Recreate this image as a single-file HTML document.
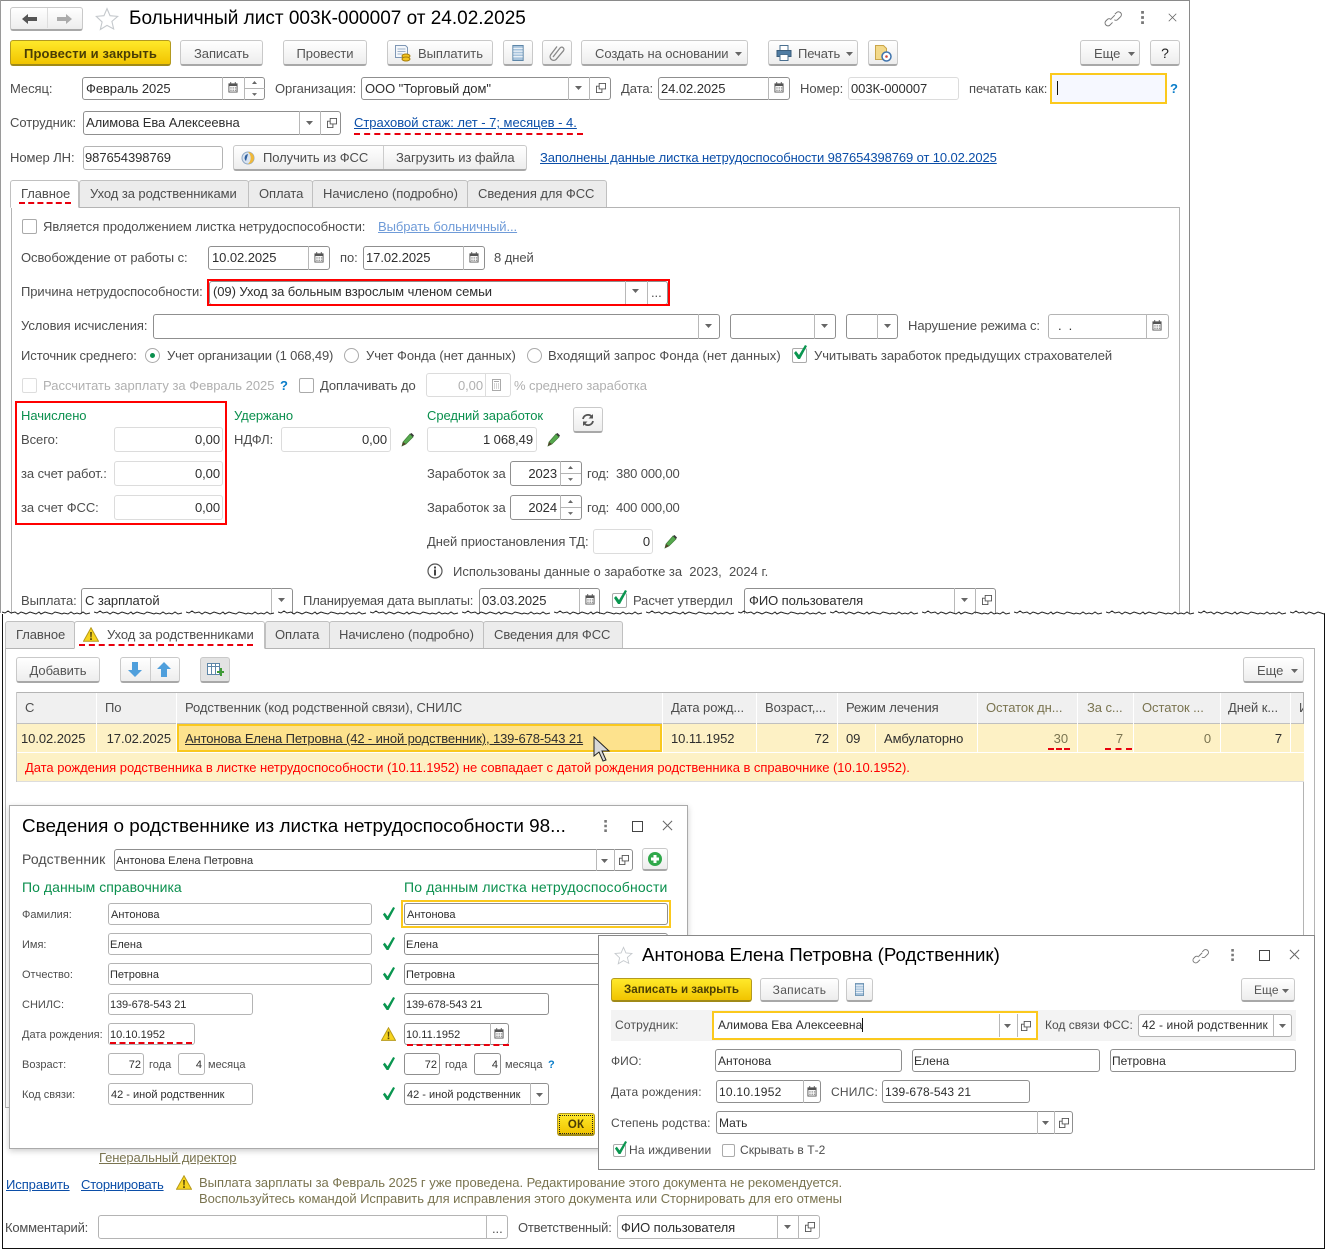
<!DOCTYPE html>
<html lang="ru"><head><meta charset="utf-8"><title>Больничный лист</title>
<style>
html,body{margin:0;padding:0;background:#fff}
#p{position:relative;width:1327px;height:1253px;overflow:hidden;background:#fff;font-family:"Liberation Sans",Arial,sans-serif;font-size:13px;letter-spacing:-.07px;color:#4d4d4d}
.t{position:absolute;white-space:nowrap;line-height:18px;height:16px}
.d{color:#2e2e2e}
.r{text-align:right}
.g{color:#0a8f4d}
.o{color:#7a7450}
.m{color:#b0b0b0}
.l{color:#0b4ea8;text-decoration:underline}
.f,.b,.y,.x{position:absolute;box-sizing:border-box}
.f{border:1px solid #b4b4b4;border-radius:3px;background:#fff}
.n{border-color:#dcdcdc}
.k{border-color:#8f8f8f}
.b{border:1px solid #c9c9c9;border-bottom:2px solid #a8a8a8;border-radius:3px;background:linear-gradient(#fff,#ededed);text-align:center;color:#555;line-height:22px}
.y{border:1px solid #b39a20;border-bottom:2px solid #a08a18;border-radius:3px;background:linear-gradient(#ffe92a,#f1c400);text-align:center;font-weight:bold;color:#4a3d05;line-height:22px;letter-spacing:.15px}
.v{position:absolute;width:1px;background:#b8b8b8}
.h{position:absolute;height:1px;background:#b4b4b4}
.x{background:#ececec;border:1px solid #c0c0c0;border-bottom:none;border-radius:3px 3px 0 0}
.w{background:#fff;border-bottom:1px solid #fff}
.q{position:absolute}
.rd{position:absolute;height:0;border-top:2px dashed #e8000d}
.rb{position:absolute;box-sizing:border-box;border:2px solid #f00}
.s{font-size:11px;letter-spacing:0;line-height:16px;height:14px;margin-top:1px}
.z{font-size:12px;letter-spacing:.05px;line-height:16px}
.c{position:absolute;box-sizing:border-box;width:15px;height:15px;border:1px solid #aaa;border-radius:2px;background:#fff}
.ra{position:absolute;box-sizing:border-box;width:15px;height:15px;border:1px solid #aaa;border-radius:50%;background:#fff}
.u{color:#0a7dc9;font-weight:bold}
</style></head><body><div id="p">
<svg width="0" height="0" style="position:absolute"><defs>
<symbol id="a" viewBox="0 0 7 4"><path d="M0 0h7L3.5 4z" fill="#666"/></symbol>
<symbol id="cal" viewBox="0 0 11 12"><path d="M1 2h9v9H1z" fill="#fff" stroke="#555"/><path d="M1 2h9v2.4H1z" fill="#555"/><path d="M3 0v2.500M8 0v2.500" stroke="#555"/><path d="M2.500 6h1.500v1H2.500zM5 6h1.500v1H5zM7.500 6H9v1H7.500zM2.500 8.500h1.500v1H2.500zM5 8.500h1.500v1H5zM7.500 8.500H9v1H7.500z" fill="#555"/></symbol>
<symbol id="cp" viewBox="0 0 11 11"><path d="M3.500 6.500V.5h7v6z M3.500 3.500H.5v7h6v-4" fill="none" stroke="#555"/></symbol>
<symbol id="ok" viewBox="0 0 14 15"><path d="M1 8l2-2 3 4L12 0l2 1-7 13H5z" fill="#0a9650"/></symbol>
<symbol id="wr" viewBox="0 0 16 15"><path d="M8 .8L15.500 14.300H.5z" fill="#f6d41f" stroke="#b79a18"/><path d="M7.100 5h1.800l-.3 5.500H7.400zM7.100 11.300h1.800v1.700H7.100z" fill="#5a4a0a"/></symbol>
<symbol id="pn" viewBox="0 0 14 14"><path d="M1 13l1-4 7-8 3 3-7 7z" fill="#56a94e" stroke="#3d7d36" stroke-width=".7"/><path d="M1 13l1-4 3 2z" fill="#54402a"/><path d="M9 1l3 3 1-1.500L10.500 0z" fill="#3a3a3a"/></symbol>
<symbol id="ch" viewBox="0 0 22 22"><path d="M13 9l-4 4M13 8l2-2a3.200 3.200 0 014.500 4.500l-3 3a3 3 0 01-4 .5M9 14a3 3 0 00-4-.5l-2 2a3.200 3.200 0 004.500 4.500l3-3" fill="none" stroke="#777" stroke-width="1.100"/></symbol>
<symbol id="dt" viewBox="0 0 4 14"><path d="M0 0h3v3H0zM0 5.500h3v3H0zM0 11h3v3H0z" fill="#777"/></symbol>
<symbol id="cl" viewBox="0 0 12 12"><path d="M1 1l10 10M11 1L1 11" stroke="#666" stroke-width="1.100" fill="none"/></symbol>
<symbol id="st" viewBox="0 0 22 22"><path d="M11 1.500l2.800 6.500 7 .6-5.300 4.600 1.600 6.900L11 16.900l-6.100 3.700 1.600-6.900L1.200 8.600l7-.6z" fill="#fff" stroke="#c4c8cc"/></symbol>
<symbol id="dc" viewBox="0 0 12 17"><path d="M.5.500h11v16H.5z" fill="#a7c3dc" stroke="#5d86a8"/><path d="M1 3.500h10M1 6.500h10M1 9.500h10M1 12.500h10" stroke="#fff"/></symbol>
<symbol id="wv" viewBox="0 0 92 5"><path d="M0 2l3 1 3-2 3 2 4-1 3 2 3-2 3 1 2 1 4-2 3 1 3 1 3-2 2 2 4-2 3 1 4 1 3-2 4 1 3 1 2-1 4 1 3-2 3 2 3-1 3 1 3-2 3 2 4-1" fill="none" stroke="#222" stroke-width="1"/></symbol>
</defs></svg>

<!-- top window -->
<div class="q" style="left:0;top:0;width:1190px;height:1px;background:#8a8a8a"></div>
<div class="q" style="left:0;top:0;width:1px;height:613px;background:#9a9a9a"></div>
<div class="q" style="left:1189px;top:0;width:1px;height:613px;background:#8a8a8a"></div>

<div class="b" style="left:10px;top:7px;width:73px;height:24px"></div><div class="v" style="left:47px;top:8px;height:20px;background:#ddd"></div>
<svg class="q" style="left:22px;top:13px" width="16" height="12"><path d="M0 6l6-5v3h9v4H6v3z" fill="#555"/></svg>
<svg class="q" style="left:57px;top:13px" width="16" height="12"><path d="M15 6L9 1v3H0v4h9v3z" fill="#aaa"/></svg>
<svg class="q" style="left:95px;top:7px" width="24" height="24"><use href="#st"/></svg>
<div class="t" style="left:129px;top:8px;height:22px;line-height:22px;font-size:19px;letter-spacing:0;color:#000">Больничный лист 003К-000007 от 24.02.2025</div>
<svg class="q" style="left:1103px;top:7px" width="20" height="20"><use href="#ch"/></svg>
<svg class="q" style="left:1141px;top:11px" width="4" height="13"><use href="#dt"/></svg>
<svg class="q" style="left:1168px;top:13px" width="9" height="9"><use href="#cl"/></svg>

<div class="y" style="left:10px;top:40px;width:161px;height:26px;line-height:26px">Провести и закрыть</div>
<div class="b" style="left:180px;top:40px;width:83px;height:26px;line-height:26px">Записать</div>
<div class="b" style="left:283px;top:40px;width:84px;height:26px;line-height:26px">Провести</div>
<div class="b" style="left:387px;top:40px;width:106px;height:26px;line-height:26px;text-align:left;padding-left:30px">Выплатить</div>
<svg class="q" style="left:395px;top:45px" width="16" height="17"><path d="M.5.500h10l2 2v10H.5z" fill="#f4f7fb" stroke="#7e96b4"/><path d="M2.500 4h8M2.500 6.500h8M2.500 9h5" stroke="#9db0c8"/><ellipse cx="11" cy="11" rx="4" ry="2" fill="#f3c421" stroke="#a67d0a"/><ellipse cx="11" cy="14" rx="4" ry="2" fill="#f3c421" stroke="#a67d0a"/></svg>
<div class="b" style="left:503px;top:40px;width:30px;height:26px"></div>
<svg class="q" style="left:512px;top:45px" width="12" height="16"><use href="#dc"/></svg>
<div class="b" style="left:542px;top:40px;width:30px;height:26px"></div>
<svg class="q" style="left:549px;top:44px" width="17" height="17"><path d="M4 13L11 4a2.200 2.200 0 013.400 2.800L7 15.500a3.600 3.600 0 01-5.400-4.600L8 2.500" fill="none" stroke="#888" stroke-width="1.300"/></svg>
<div class="b" style="left:581px;top:40px;width:167px;height:26px;line-height:26px;text-align:left;padding-left:13px">Создать на основании</div>
<svg class="q" style="left:735px;top:52px" width="7" height="4"><use href="#a"/></svg>
<div class="b" style="left:768px;top:40px;width:90px;height:26px;line-height:26px;text-align:left;padding-left:29px">Печать</div>
<svg class="q" style="left:776px;top:45px" width="16" height="16"><path d="M4 .5h8v5H4z" fill="#fff" stroke="#4a6f8f"/><path d="M1 5.500h14v6H1z" fill="#4f7ca3" stroke="#3a5c7a"/><path d="M4 9.500h8v6H4z" fill="#fff" stroke="#4a6f8f"/></svg>
<svg class="q" style="left:846px;top:52px" width="7" height="4"><use href="#a"/></svg>
<div class="b" style="left:868px;top:40px;width:30px;height:26px"></div>
<svg class="q" style="left:875px;top:45px" width="17" height="17"><path d="M.5.500h8l3 3v11H.5z" fill="#f3d98a" stroke="#c9a54a"/><circle cx="11.500" cy="11.500" r="4.500" fill="#fff" stroke="#3f74ad" stroke-width="1.500"/><circle cx="11.500" cy="11.500" r="1.300" fill="#d04a3a"/></svg>
<div class="b" style="left:1080px;top:40px;width:60px;height:26px;line-height:26px;text-align:left;padding-left:13px">Еще</div>
<svg class="q" style="left:1128px;top:52px" width="7" height="4"><use href="#a"/></svg>
<div class="b" style="left:1150px;top:40px;width:30px;height:26px;line-height:25px;color:#222;font-size:14px">?</div>

<!-- row 1 -->
<div class="t" style="left:10px;top:80px">Месяц:</div>
<div class="f k" style="left:82px;top:77px;width:183px;height:23px"></div><div class="v" style="left:222px;top:77px;height:23px"></div><div class="v" style="left:244px;top:77px;height:23px"></div><div class="h" style="left:244px;top:88px;width:21px"></div>
<div class="t d" style="left:86px;top:80px">Февраль 2025</div>
<svg class="q" style="left:228px;top:82px" width="10" height="11"><use href="#cal"/></svg>
<svg class="q" style="left:252px;top:81px" width="5" height="3"><path d="M0 3L2.500 0 5 3z" fill="#666"/></svg><svg class="q" style="left:252px;top:93px" width="5" height="3"><use href="#a"/></svg>
<div class="t" style="left:275px;top:80px">Организация:</div>
<div class="f k" style="left:361px;top:77px;width:250px;height:23px"></div><div class="v" style="left:568px;top:77px;height:23px"></div><div class="v" style="left:589px;top:77px;height:23px"></div>
<div class="t d" style="left:365px;top:80px">ООО "Торговый дом"</div>
<svg class="q" style="left:575px;top:86px" width="7" height="4"><use href="#a"/></svg><svg class="q" style="left:596px;top:83px" width="10" height="10"><use href="#cp"/></svg>
<div class="t" style="left:621px;top:80px">Дата:</div>
<div class="f k" style="left:658px;top:77px;width:132px;height:23px"></div><div class="v" style="left:768px;top:77px;height:23px"></div>
<div class="t d" style="left:661px;top:80px">24.02.2025</div>
<svg class="q" style="left:774px;top:82px" width="10" height="11"><use href="#cal"/></svg>
<div class="t" style="left:800px;top:80px">Номер:</div>
<div class="f n" style="left:848px;top:77px;width:111px;height:23px"></div>
<div class="t d" style="left:851px;top:80px">003К-000007</div>
<div class="t" style="left:969px;top:80px">печатать как:</div>
<div class="q" style="left:1050px;top:73px;width:117px;height:31px;box-sizing:border-box;border:2px solid #fbc91d;background:#f6f8ff"></div>
<div class="q" style="left:1057px;top:81px;width:1px;height:14px;background:#111"></div>
<div class="t u" style="left:1170px;top:80px">?</div>

<!-- row 2 -->
<div class="t" style="left:10px;top:114px">Сотрудник:</div>
<div class="f k" style="left:83px;top:111px;width:258px;height:24px"></div><div class="v" style="left:299px;top:111px;height:24px"></div><div class="v" style="left:320px;top:111px;height:24px"></div>
<div class="t d" style="left:86px;top:114px">Алимова Ева Алексеевна</div>
<svg class="q" style="left:306px;top:121px" width="7" height="4"><use href="#a"/></svg><svg class="q" style="left:327px;top:118px" width="10" height="10"><use href="#cp"/></svg>
<div class="t l" style="left:354px;top:114px;letter-spacing:-.02px">Страховой стаж: лет - 7; месяцев - 4.</div>
<div class="rd" style="left:354px;top:133px;width:229px"></div>

<!-- row 3 -->
<div class="t" style="left:10px;top:149px">Номер ЛН:</div>
<div class="f" style="left:83px;top:146px;width:140px;height:24px"></div>
<div class="t d" style="left:85px;top:149px">987654398769</div>
<div class="b" style="left:233px;top:145px;width:294px;height:26px"></div><div class="v" style="left:383px;top:146px;height:23px;background:#ccc"></div>
<svg class="q" style="left:241px;top:151px" width="14" height="14"><circle cx="7" cy="7" r="6" fill="#d8e3f0" stroke="#8fa7c4"/><path d="M7 1a6 6 0 010 12 8 8 0 000-12z" fill="#f0b93a"/><path d="M7 3a4 4 0 00-2 7z" fill="#2e5f9e"/></svg>
<div class="t" style="left:263px;top:149px">Получить из ФСС</div>
<div class="t" style="left:396px;top:149px">Загрузить из файла</div>
<div class="t l" style="left:540px;top:149px;letter-spacing:-.11px">Заполнены данные листка нетрудоспособности 987654398769 от 10.02.2025</div>

<!-- tabs -->
<div class="q" style="left:11px;top:207px;width:1169px;height:420px;box-sizing:border-box;border:1px solid #b4b4b4"></div>
<div class="x w" style="left:10px;top:180px;width:69px;height:28px"></div>
<div class="x" style="left:79px;top:180px;width:170px;height:27px"></div>
<div class="x" style="left:248px;top:180px;width:65px;height:27px"></div>
<div class="x" style="left:312px;top:180px;width:156px;height:27px"></div>
<div class="x" style="left:467px;top:180px;width:140px;height:27px"></div>
<div class="t" style="left:21px;top:185px">Главное</div>
<div class="t" style="left:90px;top:185px">Уход за родственниками</div>
<div class="t" style="left:259px;top:185px">Оплата</div>
<div class="t" style="left:323px;top:185px">Начислено (подробно)</div>
<div class="t" style="left:478px;top:185px">Сведения для ФСС</div>
<div class="rd" style="left:19px;top:202px;width:52px"></div>

<!-- main panel -->
<div class="c" style="left:22px;top:219px"></div>
<div class="t" style="left:43px;top:218px">Является продолжением листка нетрудоспособности:</div>
<div class="t" style="left:378px;top:218px;color:#6f9bd8;text-decoration:underline">Выбрать больничный...</div>

<div class="t" style="left:21px;top:249px">Освобождение от работы с:</div>
<div class="f k" style="left:208px;top:246px;width:122px;height:24px"></div><div class="v" style="left:308px;top:246px;height:24px"></div>
<div class="t d" style="left:212px;top:249px">10.02.2025</div>
<svg class="q" style="left:314px;top:252px" width="10" height="11"><use href="#cal"/></svg>
<div class="t" style="left:340px;top:249px">по:</div>
<div class="f k" style="left:363px;top:246px;width:122px;height:24px"></div><div class="v" style="left:463px;top:246px;height:24px"></div>
<div class="t d" style="left:366px;top:249px">17.02.2025</div>
<svg class="q" style="left:469px;top:252px" width="10" height="11"><use href="#cal"/></svg>
<div class="t" style="left:494px;top:249px">8 дней</div>

<div class="t" style="left:21px;top:283px">Причина нетрудоспособности:</div>
<div class="f k" style="left:209px;top:281px;width:459px;height:24px"></div><div class="v" style="left:625px;top:281px;height:24px"></div><div class="v" style="left:647px;top:281px;height:24px"></div>
<div class="rb" style="left:207px;top:279px;width:463px;height:27px"></div>
<div class="t d" style="left:213px;top:283px">(09) Уход за больным взрослым членом семьи</div>
<svg class="q" style="left:632px;top:289px" width="7" height="4"><use href="#a"/></svg>
<div class="t" style="left:651px;top:284px">...</div>

<div class="t" style="left:21px;top:317px">Условия исчисления:</div>
<div class="f k" style="left:153px;top:314px;width:567px;height:25px"></div><div class="v" style="left:698px;top:314px;height:25px"></div>
<svg class="q" style="left:705px;top:324px" width="7" height="4"><use href="#a"/></svg>
<div class="f k" style="left:730px;top:314px;width:106px;height:25px"></div><div class="v" style="left:814px;top:314px;height:25px"></div>
<svg class="q" style="left:821px;top:324px" width="7" height="4"><use href="#a"/></svg>
<div class="f k" style="left:846px;top:314px;width:52px;height:25px"></div><div class="v" style="left:877px;top:314px;height:25px"></div>
<svg class="q" style="left:884px;top:324px" width="7" height="4"><use href="#a"/></svg>
<div class="t" style="left:908px;top:317px">Нарушение режима с:</div>
<div class="f" style="left:1048px;top:314px;width:121px;height:25px"></div><div class="v" style="left:1146px;top:314px;height:25px"></div>
<div class="t d" style="left:1058px;top:317px">.&nbsp; .</div>
<svg class="q" style="left:1152px;top:320px" width="10" height="11"><use href="#cal"/></svg>

<div class="t" style="left:21px;top:347px">Источник среднего:</div>
<div class="ra" style="left:145px;top:348px"></div><div class="q" style="left:150px;top:353px;width:5px;height:5px;border-radius:50%;background:#0a8f4d"></div>
<div class="t" style="left:167px;top:347px;letter-spacing:-.14px">Учет организации (1 068,49)</div>
<div class="ra" style="left:344px;top:348px"></div>
<div class="t" style="left:366px;top:347px">Учет Фонда (нет данных)</div>
<div class="ra" style="left:527px;top:348px"></div>
<div class="t" style="left:548px;top:347px;letter-spacing:.08px">Входящий запрос Фонда (нет данных)</div>
<div class="c" style="left:792px;top:348px"></div>
<svg class="q" style="left:793px;top:345px" width="14" height="15"><use href="#ok"/></svg>
<div class="t" style="left:814px;top:347px">Учитывать заработок предыдущих страхователей</div>

<div class="c" style="left:22px;top:378px;border-color:#ddd"></div>
<div class="t m" style="left:43px;top:377px;letter-spacing:-.01px">Рассчитать зарплату за Февраль 2025</div>
<div class="t u" style="left:280px;top:377px">?</div>
<div class="c" style="left:299px;top:378px"></div>
<div class="t" style="left:320px;top:377px">Доплачивать до</div>
<div class="f n" style="left:426px;top:373px;width:85px;height:24px;background:#fff"></div><div class="v" style="left:485px;top:373px;height:24px;background:#ddd"></div>
<div class="t m r" style="left:430px;top:377px;width:53px">0,00</div>
<svg class="q" style="left:492px;top:379px" width="10" height="12"><path d="M.5.500h8v11h-8z" fill="none" stroke="#aaa"/><path d="M2 2.500h5M2 5h1M4 5h1M6 5h1M2 7h1M4 7h1M6 7h1M2 9h1M4 9h1M6 9h1" stroke="#aaa"/></svg>
<div class="t m" style="left:514px;top:377px">% среднего заработка</div>

<div class="rb" style="left:15px;top:401px;width:212px;height:124px"></div>
<div class="t g" style="left:21px;top:407px">Начислено</div>
<div class="t g" style="left:234px;top:407px">Удержано</div>
<div class="t g" style="left:427px;top:407px">Средний заработок</div>
<div class="t" style="left:21px;top:431px">Всего:</div>
<div class="f n" style="left:114px;top:427px;width:109px;height:25px"></div><div class="t d r" style="left:120px;top:431px;width:100px">0,00</div>
<div class="t" style="left:21px;top:465px">за счет работ.:</div>
<div class="f n" style="left:114px;top:461px;width:109px;height:25px"></div><div class="t d r" style="left:120px;top:465px;width:100px">0,00</div>
<div class="t" style="left:21px;top:499px">за счет ФСС:</div>
<div class="f n" style="left:114px;top:495px;width:109px;height:25px"></div><div class="t d r" style="left:120px;top:499px;width:100px">0,00</div>
<div class="t" style="left:234px;top:431px">НДФЛ:</div>
<div class="f n" style="left:281px;top:427px;width:110px;height:25px"></div><div class="t d r" style="left:287px;top:431px;width:100px">0,00</div>
<svg class="q" style="left:401px;top:433px" width="14" height="14"><use href="#pn"/></svg>
<div class="f n" style="left:427px;top:427px;width:110px;height:25px"></div><div class="t d r" style="left:433px;top:431px;width:100px">1 068,49</div>
<svg class="q" style="left:547px;top:433px" width="14" height="14"><use href="#pn"/></svg>
<div class="b" style="left:573px;top:407px;width:30px;height:26px"></div>
<svg class="q" style="left:582px;top:414px" width="12" height="12"><path d="M1 5a5 5 0 019-2M11 7a5 5 0 01-9 2" fill="none" stroke="#555" stroke-width="1.800"/><path d="M11 0v4.500H6.500zM1 12V7.500h4.500z" fill="#555"/></svg>

<div class="t" style="left:427px;top:465px">Заработок за</div>
<div class="f k" style="left:510px;top:461px;width:72px;height:25px"></div><div class="v" style="left:560px;top:461px;height:25px"></div><div class="h" style="left:560px;top:473px;width:21px"></div>
<div class="t d r" style="left:520px;top:465px;width:37px">2023</div>
<svg class="q" style="left:568px;top:466px" width="5" height="3"><path d="M0 3L2.500 0 5 3z" fill="#666"/></svg><svg class="q" style="left:568px;top:478px" width="5" height="3"><use href="#a"/></svg>
<div class="t" style="left:587px;top:465px;letter-spacing:-.14px">год:&nbsp; 380 000,00</div>
<div class="t" style="left:427px;top:499px">Заработок за</div>
<div class="f k" style="left:510px;top:495px;width:72px;height:25px"></div><div class="v" style="left:560px;top:495px;height:25px"></div><div class="h" style="left:560px;top:507px;width:21px"></div>
<div class="t d r" style="left:520px;top:499px;width:37px">2024</div>
<svg class="q" style="left:568px;top:500px" width="5" height="3"><path d="M0 3L2.500 0 5 3z" fill="#666"/></svg><svg class="q" style="left:568px;top:512px" width="5" height="3"><use href="#a"/></svg>
<div class="t" style="left:587px;top:499px;letter-spacing:-.14px">год:&nbsp; 400 000,00</div>
<div class="t" style="left:427px;top:533px">Дней приостановления ТД:</div>
<div class="f n" style="left:593px;top:529px;width:60px;height:25px"></div><div class="t d r" style="left:600px;top:533px;width:50px">0</div>
<svg class="q" style="left:664px;top:535px" width="14" height="14"><use href="#pn"/></svg>
<svg class="q" style="left:427px;top:563px" width="16" height="16"><circle cx="8" cy="8" r="7" fill="#fff" stroke="#555" stroke-width="1.200"/><path d="M7 3.500h2v2H7zM7 6.500h2v6H7z" fill="#444"/></svg>
<div class="t" style="left:453px;top:563px;letter-spacing:-.01px">Использованы данные о заработке за&nbsp; 2023,&nbsp; 2024 г.</div>

<div class="t" style="left:21px;top:592px">Выплата:</div>
<div class="f k" style="left:81px;top:588px;width:212px;height:30px"></div><div class="v" style="left:271px;top:588px;height:30px"></div>
<div class="t d" style="left:85px;top:592px">С зарплатой</div>
<svg class="q" style="left:278px;top:598px" width="7" height="4"><use href="#a"/></svg>
<div class="t" style="left:303px;top:592px;letter-spacing:-.15px">Планируемая дата выплаты:</div>
<div class="f k" style="left:479px;top:588px;width:121px;height:30px"></div><div class="v" style="left:579px;top:588px;height:30px"></div>
<div class="t d" style="left:482px;top:592px">03.03.2025</div>
<svg class="q" style="left:585px;top:594px" width="10" height="11"><use href="#cal"/></svg>
<div class="c" style="left:612px;top:593px"></div>
<svg class="q" style="left:613px;top:590px" width="14" height="15"><use href="#ok"/></svg>
<div class="t" style="left:633px;top:592px">Расчет утвердил</div>
<div class="f k" style="left:744px;top:588px;width:252px;height:30px"></div><div class="v" style="left:954px;top:588px;height:30px"></div><div class="v" style="left:975px;top:588px;height:30px"></div>
<div class="t d" style="left:749px;top:592px">ФИО пользователя</div>
<svg class="q" style="left:961px;top:598px" width="7" height="4"><use href="#a"/></svg><svg class="q" style="left:982px;top:595px" width="10" height="10"><use href="#cp"/></svg>

<!-- lower sheet -->
<div class="q" style="left:2px;top:614px;width:1323px;height:634px;background:#fff"></div>
<svg class="q" style="left:2px;top:610px" width="1323" height="6"><defs><pattern id="wp" width="92" height="5" patternUnits="userSpaceOnUse"><use href="#wv" width="92" height="5"/></pattern></defs><rect width="1323" height="5" fill="url(#wp)"/></svg>
<div class="q" style="left:2px;top:614px;width:1px;height:635px;background:#111"></div>
<div class="q" style="left:1324px;top:614px;width:1px;height:635px;background:#111"></div>
<div class="q" style="left:2px;top:1248px;width:1323px;height:1px;background:#111"></div>

<div class="q" style="left:5px;top:648px;width:1310px;height:460px;box-sizing:border-box;border:1px solid #b4b4b4"></div>
<div class="x" style="left:5px;top:621px;width:70px;height:27px"></div>
<div class="x w" style="left:74px;top:621px;width:191px;height:28px"></div>
<div class="x" style="left:265px;top:621px;width:65px;height:27px"></div>
<div class="x" style="left:329px;top:621px;width:155px;height:27px"></div>
<div class="x" style="left:483px;top:621px;width:140px;height:27px"></div>
<div class="t" style="left:16px;top:626px">Главное</div>
<svg class="q" style="left:83px;top:627px" width="16" height="15"><use href="#wr"/></svg>
<div class="t" style="left:107px;top:626px">Уход за родственниками</div>
<div class="t" style="left:275px;top:626px">Оплата</div>
<div class="t" style="left:339px;top:626px">Начислено (подробно)</div>
<div class="t" style="left:494px;top:626px">Сведения для ФСС</div>
<div class="rd" style="left:79px;top:644px;width:174px"></div>

<div class="b" style="left:16px;top:657px;width:84px;height:26px;line-height:26px">Добавить</div>
<div class="b" style="left:120px;top:657px;width:60px;height:26px"></div><div class="v" style="left:150px;top:658px;height:23px;background:#ccc"></div>
<svg class="q" style="left:128px;top:662px" width="14" height="15"><path d="M4 0h6v8h4l-7 7-7-7h4z" fill="#4f9fdc"/></svg>
<svg class="q" style="left:157px;top:662px" width="14" height="15"><path d="M4 15h6V7h4L7 0 0 7h4z" fill="#4f9fdc"/></svg>
<div class="b" style="left:200px;top:657px;width:30px;height:26px;background:#e3e3e3"></div>
<svg class="q" style="left:207px;top:663px" width="17" height="16"><path d="M.5.500h12v11H.5z" fill="#fff" stroke="#5d86a8"/><path d="M.5 3.500h12M4.500.5v11M8.500.5v11" stroke="#5d86a8"/><path d="M10 8h3V5h2v3h2v2h-2v3h-2v-3h-3z" fill="#3f9a36"/></svg>
<div class="b" style="left:1243px;top:657px;width:61px;height:26px;line-height:26px;text-align:left;padding-left:13px">Еще</div>
<svg class="q" style="left:1291px;top:669px" width="7" height="4"><use href="#a"/></svg>

<!-- table -->
<div class="q" style="left:16px;top:692px;width:1288px;height:32px;background:#f0f0f0;border-top:1px solid #b4b4b4;border-bottom:1px solid #c0c0c0;box-sizing:border-box"></div>
<div class="q" style="left:16px;top:692px;width:1px;height:90px;background:#c8c8c8"></div>
<div class="q" style="left:1303px;top:692px;width:1px;height:244px;background:#b4b4b4"></div>
<div class="q" style="left:17px;top:724px;width:1287px;height:57px;background:#fdf1c5"></div>
<div class="h" style="left:17px;top:781px;width:1287px;background:#ddd"></div>
<div class="h" style="left:17px;top:752px;width:1287px;background:#fff"></div>
<div class="v" style="left:96px;top:693px;height:60px;background:#fff"></div>
<div class="v" style="left:176px;top:693px;height:60px;background:#fff"></div>
<div class="v" style="left:662px;top:693px;height:60px;background:#fff"></div>
<div class="v" style="left:756px;top:693px;height:60px;background:#fff"></div>
<div class="v" style="left:837px;top:693px;height:60px;background:#fff"></div>
<div class="v" style="left:875px;top:724px;height:29px;background:#fff"></div>
<div class="v" style="left:977px;top:693px;height:60px;background:#fff"></div>
<div class="v" style="left:1077px;top:693px;height:60px;background:#fff"></div>
<div class="v" style="left:1133px;top:693px;height:60px;background:#fff"></div>
<div class="v" style="left:1220px;top:693px;height:60px;background:#fff"></div>
<div class="v" style="left:1290px;top:693px;height:60px;background:#fff"></div>
<div class="t" style="left:25px;top:699px">С</div>
<div class="t" style="left:105px;top:699px">По</div>
<div class="t" style="left:185px;top:699px">Родственник (код родственной связи), СНИЛС</div>
<div class="t" style="left:671px;top:699px">Дата рожд...</div>
<div class="t" style="left:765px;top:699px">Возраст,...</div>
<div class="t" style="left:846px;top:699px">Режим лечения</div>
<div class="t o" style="left:986px;top:699px">Остаток дн...</div>
<div class="t o" style="left:1087px;top:699px">За с...</div>
<div class="t o" style="left:1142px;top:699px">Остаток ...</div>
<div class="t" style="left:1228px;top:699px">Дней к...</div>
<div class="t" style="left:1299px;top:699px;width:4px;overflow:hidden">И</div>
<div class="q" style="left:177px;top:724px;width:485px;height:28px;box-sizing:border-box;border:2px solid #f9c81e;background:#fde28d"></div>
<div class="t d" style="left:21px;top:730px">10.02.2025</div>
<div class="t d r" style="left:100px;top:730px;width:71px">17.02.2025</div>
<div class="t d" style="left:185px;top:730px;text-decoration:underline;letter-spacing:-.12px">Антонова Елена Петровна (42 - иной родственник), 139-678-543 21</div>
<div class="t d" style="left:671px;top:730px">10.11.1952</div>
<div class="t d r" style="left:780px;top:730px;width:49px">72</div>
<div class="t d" style="left:846px;top:730px">09</div>
<div class="t d" style="left:884px;top:730px">Амбулаторно</div>
<div class="t o r" style="left:1020px;top:730px;width:48px">30</div>
<div class="t o r" style="left:1090px;top:730px;width:33px">7</div>
<div class="t o r" style="left:1170px;top:730px;width:41px">0</div>
<div class="t d r" style="left:1240px;top:730px;width:42px">7</div>
<div class="rd" style="left:1048px;top:748px;width:22px"></div>
<div class="rd" style="left:1105px;top:748px;width:27px"></div>
<div class="t" style="left:25px;top:759px;color:#f00;letter-spacing:-.04px">Дата рождения родственника в листке нетрудоспособности (10.11.1952) не совпадает с датой рождения родственника в справочнике (10.10.1952).</div>
<svg class="q" style="left:593px;top:736px" width="18" height="27"><path d="M1 1v19l5-4 4 9 3-1-4-9h7z" fill="#d8d8d8" stroke="#222"/></svg>

<!-- dialog 1 -->
<div class="q" style="left:9px;top:805px;width:679px;height:344px;box-sizing:border-box;border:1px solid #aaa;background:#fff;box-shadow:0 2px 6px rgba(0,0,0,.2)"></div>
<div class="t" style="left:22px;top:816px;height:22px;line-height:22px;font-size:18.900px;letter-spacing:0;color:#000">Сведения о родственнике из листка нетрудоспособности 98...</div>
<svg class="q" style="left:604px;top:820px" width="4" height="12"><use href="#dt"/></svg>
<div class="q" style="left:632px;top:821px;width:9px;height:9px;border:1px solid #444"></div>
<svg class="q" style="left:662px;top:820px" width="11" height="11"><use href="#cl"/></svg>
<div class="t" style="left:22px;top:850px;font-size:14px;letter-spacing:.1px">Родственник</div>
<div class="f k" style="left:114px;top:849px;width:519px;height:22px"></div><div class="v" style="left:596px;top:849px;height:22px"></div><div class="v" style="left:614px;top:849px;height:22px"></div>
<div class="t s d" style="left:116px;top:852px;letter-spacing:.07px">Антонова Елена Петровна</div>
<svg class="q" style="left:601px;top:859px" width="7" height="4"><use href="#a"/></svg><svg class="q" style="left:619px;top:855px" width="10" height="10"><use href="#cp"/></svg>
<div class="b" style="left:642px;top:848px;width:26px;height:23px"></div>
<svg class="q" style="left:648px;top:852px" width="14" height="14"><circle cx="7" cy="7" r="7" fill="#2fa84a"/><path d="M5.500 3h3v2.500H11v3H8.500V11h-3V8.500H3v-3h2.500z" fill="#fff"/></svg>
<div class="t g" style="left:22px;top:878px;font-size:14px;letter-spacing:.05px">По данным справочника</div>
<div class="t g" style="left:404px;top:878px;font-size:14px;letter-spacing:.16px">По данным листка нетрудоспособности</div>

<div class="t s" style="left:22px;top:906px">Фамилия:</div>
<div class="t s" style="left:22px;top:936px">Имя:</div>
<div class="t s" style="left:22px;top:966px">Отчество:</div>
<div class="t s" style="left:22px;top:996px">СНИЛС:</div>
<div class="t s" style="left:22px;top:1026px">Дата рождения:</div>
<div class="t s" style="left:22px;top:1056px">Возраст:</div>
<div class="t s" style="left:22px;top:1086px">Код связи:</div>
<div class="f" style="left:108px;top:903px;width:264px;height:22px"></div><div class="t s d" style="left:111px;top:906px">Антонова</div>
<div class="f" style="left:108px;top:933px;width:264px;height:22px"></div><div class="t s d" style="left:110px;top:936px">Елена</div>
<div class="f" style="left:108px;top:963px;width:264px;height:22px"></div><div class="t s d" style="left:110px;top:966px">Петровна</div>
<div class="f" style="left:108px;top:993px;width:145px;height:22px"></div><div class="t s d" style="left:110px;top:996px;letter-spacing:-.1px">139-678-543 21</div>
<div class="f" style="left:108px;top:1023px;width:87px;height:22px"></div><div class="t s d" style="left:110px;top:1026px">10.10.1952</div>
<div class="rd" style="left:110px;top:1042px;width:82px"></div>
<div class="f" style="left:108px;top:1053px;width:36px;height:22px"></div><div class="t s d r" style="left:110px;top:1056px;width:31px">72</div>
<div class="t s" style="left:149px;top:1056px">года</div>
<div class="f" style="left:178px;top:1053px;width:27px;height:22px"></div><div class="t s d r" style="left:180px;top:1056px;width:22px">4</div>
<div class="t s" style="left:208px;top:1056px">месяца</div>
<div class="f" style="left:108px;top:1083px;width:145px;height:22px"></div><div class="t s d" style="left:111px;top:1086px">42 - иной родственник</div>
<svg class="q" style="left:382px;top:907px" width="13" height="14"><use href="#ok"/></svg>
<svg class="q" style="left:382px;top:937px" width="13" height="14"><use href="#ok"/></svg>
<svg class="q" style="left:382px;top:967px" width="13" height="14"><use href="#ok"/></svg>
<svg class="q" style="left:382px;top:997px" width="13" height="14"><use href="#ok"/></svg>
<svg class="q" style="left:381px;top:1027px" width="15" height="14"><use href="#wr"/></svg>
<svg class="q" style="left:382px;top:1057px" width="13" height="14"><use href="#ok"/></svg>
<svg class="q" style="left:382px;top:1087px" width="13" height="14"><use href="#ok"/></svg>
<div class="q" style="left:401px;top:900px;width:270px;height:28px;box-sizing:border-box;border:2px solid #fbc91d"></div>
<div class="f k" style="left:404px;top:903px;width:264px;height:22px"></div><div class="t s d" style="left:407px;top:906px">Антонова</div>
<div class="f k" style="left:404px;top:933px;width:264px;height:22px"></div><div class="t s d" style="left:406px;top:936px">Елена</div>
<div class="f k" style="left:404px;top:963px;width:264px;height:22px"></div><div class="t s d" style="left:406px;top:966px">Петровна</div>
<div class="f k" style="left:404px;top:993px;width:145px;height:22px"></div><div class="t s d" style="left:406px;top:996px;letter-spacing:-.1px">139-678-543 21</div>
<div class="f k" style="left:404px;top:1023px;width:105px;height:22px"></div><div class="v" style="left:490px;top:1023px;height:22px"></div><div class="t s d" style="left:406px;top:1026px">10.11.1952</div>
<svg class="q" style="left:494px;top:1028px" width="10" height="11"><use href="#cal"/></svg>
<div class="rd" style="left:407px;top:1044px;width:102px"></div>
<div class="f k" style="left:404px;top:1053px;width:36px;height:22px"></div><div class="t s d r" style="left:406px;top:1056px;width:31px">72</div>
<div class="t s" style="left:445px;top:1056px">года</div>
<div class="f k" style="left:474px;top:1053px;width:27px;height:22px"></div><div class="t s d r" style="left:476px;top:1056px;width:22px">4</div>
<div class="t s" style="left:505px;top:1056px">месяца</div>
<div class="t s u" style="left:548px;top:1056px">?</div>
<div class="f k" style="left:404px;top:1083px;width:145px;height:22px"></div><div class="v" style="left:530px;top:1083px;height:22px"></div><div class="t s d" style="left:407px;top:1086px">42 - иной родственник</div>
<svg class="q" style="left:536px;top:1093px" width="7" height="4"><use href="#a"/></svg>
<div class="y" style="left:557px;top:1113px;width:38px;height:23px;line-height:18px;font-size:11.5px"><span style="display:block;margin:1px;border:1px dotted #222;height:17px">ОК</span></div>

<!-- dialog 2 -->
<div class="q" style="left:598px;top:935px;width:717px;height:235px;box-sizing:border-box;border:1px solid #888;background:#fff"></div>
<svg class="q" style="left:614px;top:946px" width="19" height="19"><use href="#st"/></svg>
<div class="t" style="left:642px;top:944px;height:22px;line-height:22px;font-size:18.700px;letter-spacing:0;color:#000">Антонова Елена Петровна (Родственник)</div>
<svg class="q" style="left:1191px;top:945px" width="19" height="19"><use href="#ch"/></svg>
<svg class="q" style="left:1231px;top:949px" width="4" height="12"><use href="#dt"/></svg>
<div class="q" style="left:1259px;top:950px;width:9px;height:9px;border:1px solid #444"></div>
<svg class="q" style="left:1289px;top:949px" width="11" height="11"><use href="#cl"/></svg>
<div class="y" style="left:611px;top:978px;width:141px;height:24px;line-height:22px;letter-spacing:0;font-size:11.600px">Записать и закрыть</div>
<div class="b z" style="left:760px;top:978px;width:79px;height:24px;line-height:22px;letter-spacing:.3px">Записать</div>
<div class="b" style="left:846px;top:978px;width:27px;height:24px"></div>
<svg class="q" style="left:855px;top:983px" width="9" height="13"><use href="#dc"/></svg>
<div class="b z" style="left:1241px;top:978px;width:54px;height:24px;line-height:22px;text-align:left;padding-left:12px">Еще</div>
<svg class="q" style="left:1282px;top:989px" width="7" height="4"><use href="#a"/></svg>
<div class="q" style="left:611px;top:1010px;width:685px;height:31px;background:#f3f3f3"></div>
<div class="t z" style="left:615px;top:1017px;letter-spacing:.2px">Сотрудник:</div>
<div class="q" style="left:712px;top:1011px;width:326px;height:29px;box-sizing:border-box;border:2px solid #fbc91d;background:#fff"></div>
<div class="v" style="left:999px;top:1014px;height:23px"></div><div class="v" style="left:1017px;top:1014px;height:23px"></div>
<div class="t d z" style="left:718px;top:1017px">Алимова Ева Алексеевна</div>
<div class="q" style="left:862px;top:1018px;width:1px;height:14px;background:#111"></div>
<svg class="q" style="left:1004px;top:1024px" width="7" height="4"><use href="#a"/></svg><svg class="q" style="left:1021px;top:1021px" width="10" height="10"><use href="#cp"/></svg>
<div class="t z" style="left:1045px;top:1017px;letter-spacing:0">Код связи ФСС:</div>
<div class="f" style="left:1138px;top:1014px;width:154px;height:23px"></div><div class="v" style="left:1273px;top:1014px;height:23px"></div>
<div class="t d z" style="left:1142px;top:1017px;letter-spacing:.1px">42 - иной родственник</div>
<svg class="q" style="left:1279px;top:1024px" width="7" height="4"><use href="#a"/></svg>
<div class="t z" style="left:611px;top:1053px">ФИО:</div>
<div class="f k" style="left:715px;top:1049px;width:187px;height:23px"></div><div class="t d z" style="left:718px;top:1053px">Антонова</div>
<div class="f k" style="left:912px;top:1049px;width:188px;height:23px"></div><div class="t d z" style="left:914px;top:1053px">Елена</div>
<div class="f k" style="left:1110px;top:1049px;width:186px;height:23px"></div><div class="t d z" style="left:1112px;top:1053px">Петровна</div>
<div class="t z" style="left:611px;top:1084px;letter-spacing:.2px">Дата рождения:</div>
<div class="f k" style="left:716px;top:1080px;width:105px;height:23px"></div><div class="v" style="left:803px;top:1080px;height:23px"></div>
<div class="t d z" style="left:719px;top:1084px;letter-spacing:.25px">10.10.1952</div>
<svg class="q" style="left:807px;top:1086px" width="10" height="11"><use href="#cal"/></svg>
<div class="t z" style="left:831px;top:1084px;letter-spacing:.2px">СНИЛС:</div>
<div class="f k" style="left:882px;top:1080px;width:148px;height:23px"></div><div class="t d z" style="left:885px;top:1084px;letter-spacing:.1px">139-678-543 21</div>
<div class="t z" style="left:611px;top:1115px;letter-spacing:.1px">Степень родства:</div>
<div class="f k" style="left:716px;top:1111px;width:357px;height:23px"></div><div class="v" style="left:1037px;top:1111px;height:23px"></div><div class="v" style="left:1054px;top:1111px;height:23px"></div>
<div class="t d z" style="left:719px;top:1115px">Мать</div>
<svg class="q" style="left:1042px;top:1121px" width="7" height="4"><use href="#a"/></svg><svg class="q" style="left:1059px;top:1118px" width="10" height="10"><use href="#cp"/></svg>
<div class="c" style="left:613px;top:1144px;width:13px;height:13px"></div>
<svg class="q" style="left:614px;top:1141px" width="13" height="14"><use href="#ok"/></svg>
<div class="t z" style="left:629px;top:1142px;letter-spacing:.2px">На иждивении</div>
<div class="c" style="left:722px;top:1144px;width:13px;height:13px"></div>
<div class="t z" style="left:740px;top:1142px">Скрывать в Т-2</div>

<!-- bottom -->
<div class="t o" style="left:99px;top:1149px;text-decoration:underline;letter-spacing:-.1px">Генеральный директор</div>
<div class="t l" style="left:6px;top:1176px">Исправить</div>
<div class="t l" style="left:81px;top:1176px;letter-spacing:-.2px">Сторнировать</div>
<svg class="q" style="left:176px;top:1175px" width="16" height="15"><use href="#wr"/></svg>
<div class="t o" style="left:199px;top:1174px;letter-spacing:-.03px">Выплата зарплаты за Февраль 2025 г уже проведена. Редактирование этого документа не рекомендуется.</div>
<div class="t o" style="left:199px;top:1190px;letter-spacing:-.05px">Воспользуйтесь командой Исправить для исправления этого документа или Сторнировать для его отмены</div>
<div class="t" style="left:5px;top:1219px;letter-spacing:-.2px">Комментарий:</div>
<div class="f" style="left:98px;top:1215px;width:410px;height:24px"></div><div class="v" style="left:486px;top:1215px;height:24px"></div>
<div class="t" style="left:492px;top:1220px">...</div>
<div class="t" style="left:518px;top:1219px;letter-spacing:-.2px">Ответственный:</div>
<div class="f" style="left:617px;top:1215px;width:203px;height:24px"></div><div class="v" style="left:777px;top:1215px;height:24px"></div><div class="v" style="left:798px;top:1215px;height:24px"></div>
<div class="t d" style="left:621px;top:1219px">ФИО пользователя</div>
<svg class="q" style="left:784px;top:1225px" width="7" height="4"><use href="#a"/></svg><svg class="q" style="left:805px;top:1222px" width="10" height="10"><use href="#cp"/></svg>
</div></body></html>
